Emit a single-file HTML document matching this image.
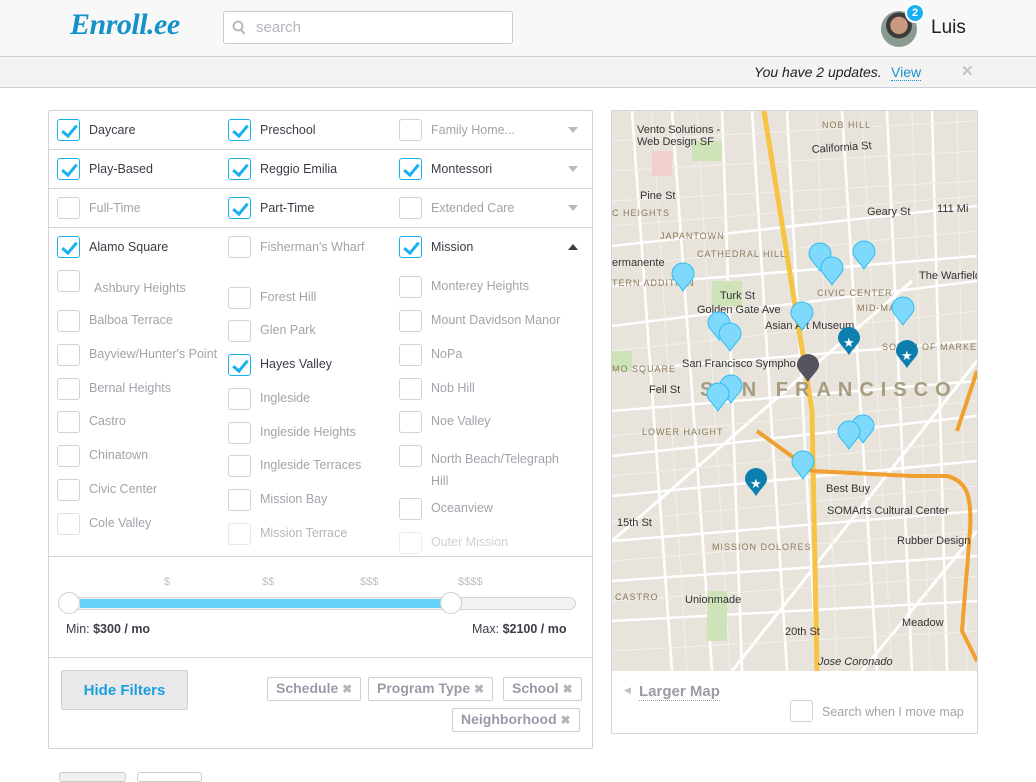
<!DOCTYPE html>
<html><head><meta charset="utf-8"><style>
*{box-sizing:border-box;margin:0;padding:0}
body{width:1036px;height:777px;overflow:hidden;background:#fff;font-family:"Liberation Sans",sans-serif;position:relative}
.a{position:absolute}
.hdr{left:0;top:0;width:1036px;height:57px;background:#f8f8f8;border-bottom:1px solid #cfcfd4}
.bar{left:0;top:57px;width:1036px;height:31px;background:#f3f3f3;border-bottom:1px solid #d0d0d4}
.cb{position:absolute;width:23px;height:22px;border:1px solid #d2d2d6;border-radius:3px;background:#fff}
.cb.on{border-color:#1ab0ef}
.cb.on:after{content:"";position:absolute;left:7px;top:2px;width:6px;height:12px;border:solid #1ab0ef;border-width:0 3px 3px 0;transform:rotate(40deg)}
.lb{position:absolute;font-size:12.5px;color:#3c3c48;white-space:nowrap}
.lb.g{color:#a3a3ab}
.hl{position:absolute;left:49px;width:544px;height:1px;background:#d6d6da}
.tri{position:absolute;width:0;height:0;border-left:5px solid transparent;border-right:5px solid transparent;border-top:6px solid #b8b8c0}
.tag{position:absolute;height:24px;border:1px solid #cfcfd4;border-radius:2px;font-size:14px;font-weight:bold;color:#9b9ba8;padding:2px 8px;white-space:nowrap}
.tag b{color:#b5b5bd;font-size:12px}
</style></head><body>
<div class="a hdr"></div>
<div class="a" style="left:70px;top:8px;font-family:'Liberation Serif',serif;font-style:italic;font-weight:bold;font-size:30px;color:#1593c9;letter-spacing:-0.5px">Enroll.ee</div>
<div class="a" style="left:223px;top:11px;width:290px;height:33px;border:1px solid #c9c9cf;border-radius:3px;background:#fff"></div>
<svg class="a" style="left:232px;top:20px" width="14" height="16"><circle cx="6" cy="6" r="4.5" stroke="#b5b5bd" stroke-width="1.8" fill="none"/><line x1="9" y1="9.5" x2="12.5" y2="14" stroke="#b5b5bd" stroke-width="2"/></svg>
<div class="a" style="left:256px;top:19px;font-size:15px;color:#b5b5bd">search</div>
<div class="a" style="left:881px;top:11px;width:36px;height:36px;border-radius:50%;background:radial-gradient(circle at 50% 40%,#c99a80 0 30%,#3b3b3b 32% 45%,#8a9a8e 47%)"></div>
<div class="a" style="left:905px;top:3px;width:20px;height:20px;border-radius:50%;background:#1ab0ef;border:2px solid #fff;color:#fff;font-size:11px;font-weight:bold;text-align:center;line-height:16px">2</div>
<div class="a" style="left:931px;top:17px;font-size:19px;color:#222">Luis</div>
<div class="a bar"></div>
<div class="a" style="left:754px;top:64px;font-size:14px;font-style:italic;color:#222">You have 2 updates.</div>
<div class="a" style="left:891px;top:64px;font-size:14px;color:#1593c9;border-bottom:1px dotted #1593c9;line-height:16px">View</div>
<div class="a" style="left:961px;top:62px;font-size:15px;color:#c2c2c8;font-weight:bold">✕</div>

<div class="a" style="left:48px;top:110px;width:545px;height:639px;border:1px solid #d3d3d8;border-radius:2px"></div>
<div class="hl" style="top:149px"></div><div class="hl" style="top:188px"></div><div class="hl" style="top:227px"></div><div class="hl" style="top:556px"></div><div class="hl" style="top:657px"></div>

<div class="cb on" style="left:57px;top:119px"></div><div class="lb" style="left:89px;top:123px">Daycare</div>
<div class="cb on" style="left:228px;top:119px"></div><div class="lb" style="left:260px;top:123px">Preschool</div>
<div class="cb" style="left:399px;top:119px"></div><div class="lb g" style="left:431px;top:123px">Family Home...</div><div class="tri" style="left:568px;top:127px"></div>
<div class="cb on" style="left:57px;top:158px"></div><div class="lb" style="left:89px;top:162px">Play-Based</div>
<div class="cb on" style="left:228px;top:158px"></div><div class="lb" style="left:260px;top:162px">Reggio Emilia</div>
<div class="cb on" style="left:399px;top:158px"></div><div class="lb" style="left:431px;top:162px">Montessori</div><div class="tri" style="left:568px;top:166px"></div>
<div class="cb" style="left:57px;top:197px"></div><div class="lb g" style="left:89px;top:201px">Full-Time</div>
<div class="cb on" style="left:228px;top:197px"></div><div class="lb" style="left:260px;top:201px">Part-Time</div>
<div class="cb" style="left:399px;top:197px"></div><div class="lb g" style="left:431px;top:201px">Extended Care</div><div class="tri" style="left:568px;top:205px"></div>
<div class="cb on" style="left:57px;top:236px"></div><div class="lb" style="left:89px;top:240px">Alamo Square</div>
<div class="cb" style="left:228px;top:236px"></div><div class="lb g" style="left:260px;top:240px">Fisherman's Wharf</div>
<div class="cb on" style="left:399px;top:236px"></div><div class="lb" style="left:431px;top:240px">Mission</div><div class="tri" style="left:568px;top:244px;border-top:0;border-bottom:6px solid #3c3c48"></div>

<div class="cb" style="left:57px;top:270px"></div><div class="lb g" style="left:94px;top:281px">Ashbury Heights</div>
<div class="cb" style="left:57px;top:310px"></div><div class="lb g" style="left:89px;top:313px">Balboa Terrace</div>
<div class="cb" style="left:57px;top:344px"></div><div class="lb g" style="left:89px;top:347px">Bayview/Hunter's Point</div>
<div class="cb" style="left:57px;top:378px"></div><div class="lb g" style="left:89px;top:381px">Bernal Heights</div>
<div class="cb" style="left:57px;top:411px"></div><div class="lb g" style="left:89px;top:414px">Castro</div>
<div class="cb" style="left:57px;top:445px"></div><div class="lb g" style="left:89px;top:448px">Chinatown</div>
<div class="cb" style="left:57px;top:479px"></div><div class="lb g" style="left:89px;top:482px">Civic Center</div>
<div class="cb" style="left:57px;top:513px;opacity:.7"></div><div class="lb g" style="left:89px;top:516px">Cole Valley</div>
<div class="cb" style="left:228px;top:287px"></div><div class="lb g" style="left:260px;top:290px">Forest Hill</div>
<div class="cb" style="left:228px;top:320px"></div><div class="lb g" style="left:260px;top:323px">Glen Park</div>
<div class="cb on" style="left:228px;top:354px"></div><div class="lb" style="left:260px;top:357px">Hayes Valley</div>
<div class="cb" style="left:228px;top:388px"></div><div class="lb g" style="left:260px;top:391px">Ingleside</div>
<div class="cb" style="left:228px;top:422px"></div><div class="lb g" style="left:260px;top:425px">Ingleside Heights</div>
<div class="cb" style="left:228px;top:455px"></div><div class="lb g" style="left:260px;top:458px">Ingleside Terraces</div>
<div class="cb" style="left:228px;top:489px"></div><div class="lb g" style="left:260px;top:492px">Mission Bay</div>
<div class="cb" style="left:228px;top:523px;opacity:.5"></div><div class="lb g" style="left:260px;top:526px;opacity:.8">Mission Terrace</div>
<div class="cb" style="left:399px;top:276px"></div><div class="lb g" style="left:431px;top:279px">Monterey Heights</div>
<div class="cb" style="left:399px;top:310px"></div><div class="lb g" style="left:431px;top:313px">Mount Davidson Manor</div>
<div class="cb" style="left:399px;top:344px"></div><div class="lb g" style="left:431px;top:347px">NoPa</div>
<div class="cb" style="left:399px;top:378px"></div><div class="lb g" style="left:431px;top:381px">Nob Hill</div>
<div class="cb" style="left:399px;top:411px"></div><div class="lb g" style="left:431px;top:414px">Noe Valley</div>
<div class="cb" style="left:399px;top:445px"></div><div class="lb g" style="left:431px;top:448px;line-height:22px">North Beach/Telegraph<br>Hill</div>
<div class="cb" style="left:399px;top:498px"></div><div class="lb g" style="left:431px;top:501px">Oceanview</div>
<div class="cb" style="left:399px;top:532px;opacity:.4"></div><div class="lb g" style="left:431px;top:535px;opacity:.5">Outer Mission</div>

<div class="lb g" style="left:164px;top:576px;font-size:11px;color:#c0c0c6">$</div>
<div class="lb g" style="left:262px;top:576px;font-size:11px;color:#c0c0c6">$$</div>
<div class="lb g" style="left:360px;top:576px;font-size:11px;color:#c0c0c6">$$$</div>
<div class="lb g" style="left:458px;top:576px;font-size:11px;color:#c0c0c6">$$$$</div>
<div class="a" style="left:68px;top:597px;width:508px;height:13px;border:1px solid #d5d5da;border-radius:7px;background:#f2f2f2"></div>
<div class="a" style="left:80px;top:599px;width:371px;height:9px;background:#66d3fa"></div>
<div class="a" style="left:58px;top:592px;width:22px;height:22px;border-radius:50%;border:1px solid #cdcdd2;background:#fff"></div>
<div class="a" style="left:440px;top:592px;width:22px;height:22px;border-radius:50%;border:1px solid #cdcdd2;background:#fff"></div>
<div class="lb" style="left:66px;top:622px">Min: <b>$300 / mo</b></div>
<div class="lb" style="left:472px;top:622px">Max: <b>$2100 / mo</b></div>

<div class="a" style="left:61px;top:670px;width:127px;height:40px;background:#e9e9ec;border:1px solid #cfcfd4;border-radius:2px;color:#1a9fdb;font-weight:bold;font-size:15px;text-align:center;line-height:40px">Hide Filters</div>
<div class="tag" style="left:267px;top:677px">Schedule <b>✖</b></div>
<div class="tag" style="left:368px;top:677px">Program Type <b>✖</b></div>
<div class="tag" style="left:503px;top:677px">School <b>✖</b></div>
<div class="tag" style="left:452px;top:708px">Neighborhood <b>✖</b></div>
<div class="a" style="left:59px;top:772px;width:67px;height:10px;border:1px solid #ccc;border-radius:3px;background:#f0f0f0"></div>
<div class="a" style="left:137px;top:772px;width:65px;height:10px;border:1px solid #ccc;border-radius:3px"></div>

<div class="a" style="left:611px;top:110px;width:367px;height:624px;border:1px solid #d3d3d8;border-radius:2px"></div>
<svg class="a" style="left:612px;top:111px" width="365" height="560" font-family="Liberation Sans" font-size="11">
<rect width="365" height="560" fill="#e8e4dc"/>
<g stroke="#fff" stroke-width="2.5" fill="none">
<path d="M0 135 L365 95 M0 175 L365 145 M0 215 L365 170 M0 260 L365 230 M0 300 L365 270 M0 345 L365 305 M0 385 L365 350 M0 430 L365 400 M0 470 L365 445 M0 510 L365 490"/>
<path d="M20 0 L60 560 M60 0 L100 560 M110 0 L130 560 M140 0 L175 560 M175 0 L205 560 M230 0 L265 560 M275 0 L300 560 M320 0 L335 560"/>
<path d="M0 430 L300 170 M120 560 L365 250 M250 560 L365 420" stroke-width="3"/>
</g>
<g stroke="#f3f1ec" stroke-width="1" fill="none">
<path d="M0 30 L365 10 M0 60 L365 40 M0 90 L365 70 M0 115 L365 85 M0 155 L365 120 M0 240 L365 200 M0 325 L365 290 M0 365 L365 330 M0 410 L365 375 M0 450 L365 420 M0 490 L365 465 M0 540 L365 520"/>
<path d="M40 0 L75 560 M85 0 L118 560 M205 0 L225 560 M250 0 L280 560 M300 0 L318 560 M345 0 L355 560"/>
</g>
<path d="M152 0 L200 300 L205 560" stroke="#f6c342" stroke-width="5" fill="none"/>
<path d="M145 320 L200 360 L300 365 L335 365 C355 370 360 385 358 420 L350 520 L365 550" stroke="#f0a030" stroke-width="4" fill="none"/>
<path d="M345 320 L365 260" stroke="#f0a030" stroke-width="4" fill="none"/>
<g fill="#cfe3b8"><rect x="80" y="30" width="30" height="20"/><rect x="100" y="170" width="30" height="25"/><rect x="95" y="480" width="20" height="50"/><rect x="0" y="240" width="20" height="20"/></g>
<rect x="40" y="40" width="20" height="25" fill="#f1d0cc"/>
<g fill="#333" font-size="11"><text x="25" y="22">Vento Solutions -</text><text x="25" y="34">Web Design SF</text><text x="200" y="42" transform="rotate(-4 200 42)">California St</text><text x="28" y="88">Pine St</text><text x="255" y="104">Geary St</text><text x="325" y="101">111 Mi</text><text x="108" y="188">Turk St</text><text x="85" y="202">Golden Gate Ave</text><text x="153" y="218">Asian Art Museum</text><text x="70" y="256">San Francisco Sympho</text><text x="37" y="282">Fell St</text><text x="307" y="168">The Warfield</text><text x="215" y="403">SOMArts Cultural Center</text><text x="214" y="381">Best Buy</text><text x="73" y="492">Unionmade</text><text x="285" y="433">Rubber Design</text><text x="290" y="515">Meadow</text><text x="206" y="554" font-style="italic">Jose Coronado</text><text x="0" y="155">ermanente</text><text x="173" y="524">20th St</text><text x="5" y="415">15th St</text></g>
<g fill="#8c7a5a" font-size="9" letter-spacing="1"><text x="210" y="17">NOB HILL</text><text x="0" y="105">C HEIGHTS</text><text x="48" y="128">JAPANTOWN</text><text x="85" y="146">CATHEDRAL HILL</text><text x="205" y="185">CIVIC CENTER</text><text x="245" y="200">MID-MA</text><text x="270" y="239">SOUTH OF MARKET</text><text x="0" y="261">MO SQUARE</text><text x="0" y="175">TERN ADDITION</text><text x="30" y="324">LOWER HAIGHT</text><text x="100" y="439">MISSION DOLORES</text><text x="3" y="489">CASTRO</text></g>
<text x="88" y="285" fill="#a89c80" font-size="20" letter-spacing="7" font-weight="bold">SAN FRANCISCO</text>
<defs><path id="p" d="M11 28 C5 19 0 16 0 11 A11 11 0 0 1 22 11 C22 16 17 19 11 28Z"/></defs>
<g fill="#7fd9fc" stroke="#2cbcf2" stroke-width="1">
<use href="#p" x="60" y="152"/><use href="#p" x="197" y="132"/><use href="#p" x="209" y="146"/><use href="#p" x="241" y="130"/><use href="#p" x="96" y="201"/><use href="#p" x="107" y="212"/><use href="#p" x="179" y="191"/><use href="#p" x="280" y="186"/><use href="#p" x="108" y="264"/><use href="#p" x="95" y="272"/><use href="#p" x="240" y="304"/><use href="#p" x="226" y="310"/><use href="#p" x="180" y="340"/>
</g>
<g fill="#0d7fae"><use href="#p" x="226" y="216"/><use href="#p" x="284" y="229"/><use href="#p" x="133" y="357"/></g>
<g fill="#fff" font-size="13"><text x="231" y="236">★</text><text x="289" y="249">★</text><text x="138" y="377">★</text></g>
<use href="#p" x="185" y="243" fill="#54545e"/>
</svg>
<div class="a" style="left:624px;top:685px;color:#c0c0c6;font-size:9px">◀</div>
<div class="a" style="left:639px;top:683px;font-size:15px;font-weight:bold;color:#9b9ba8;border-bottom:1px dotted #9b9ba8;line-height:17px">Larger Map</div>
<div class="cb" style="left:790px;top:700px"></div>
<div class="lb g" style="left:822px;top:705px">Search when I move map</div>
</body></html>
